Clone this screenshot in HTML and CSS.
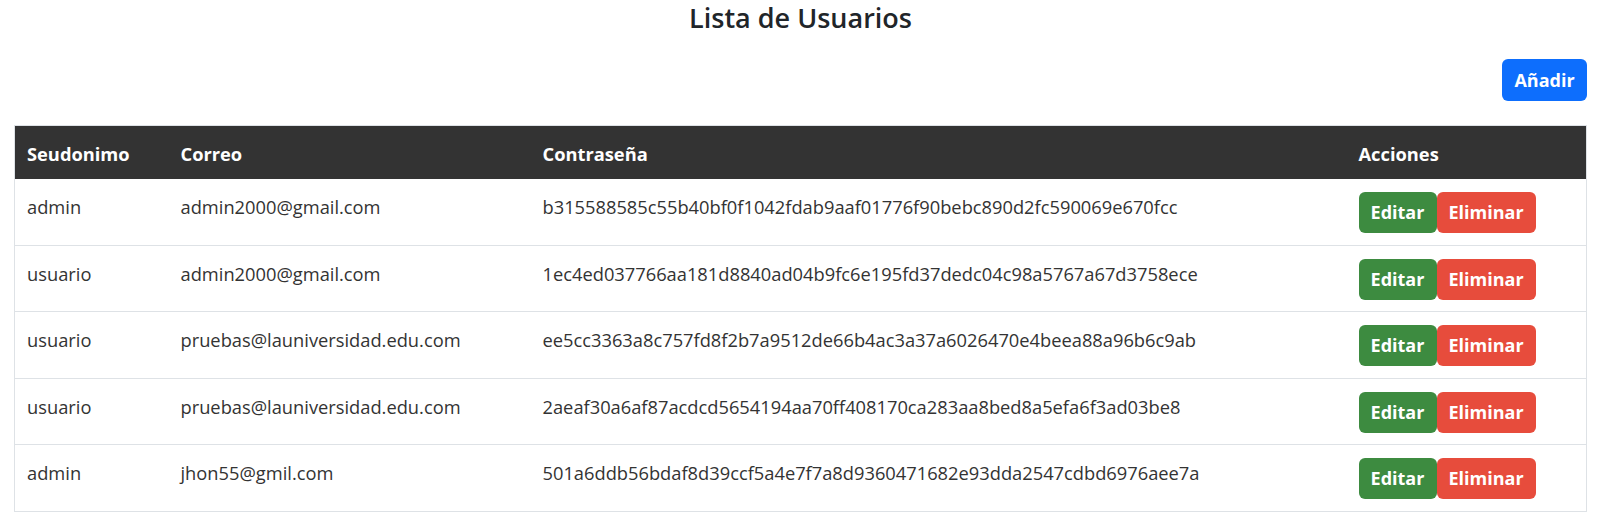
FILE: index.html
```html
<!DOCTYPE html>
<html lang="es">
<head>
<meta charset="utf-8">
<title>Lista de Usuarios</title>
<link rel="stylesheet" href="styles.css">
</head>
<body>
<main class="page">
  <h1 class="title">Lista de Usuarios</h1>
  <div class="toolbar">
    <button class="btn btn-add">Añadir</button>
  </div>
  <table class="users">
    <colgroup>
      <col class="c-alias">
      <col class="c-mail">
      <col class="c-pass">
      <col class="c-actions">
    </colgroup>
    <thead>
      <tr><th>Seudonimo</th><th>Correo</th><th>Contraseña</th><th>Acciones</th></tr>
    </thead>
    <tbody>
      <tr>
        <td>admin</td><td>admin2000@gmail.com</td><td>b315588585c55b40bf0f1042fdab9aaf01776f90bebc890d2fc590069e670fcc</td>
        <td class="actions"><div class="btn-group"><button class="btn btn-edit">Editar</button><button class="btn btn-del">Eliminar</button></div></td>
      </tr>
      <tr>
        <td>usuario</td><td>admin2000@gmail.com</td><td>1ec4ed037766aa181d8840ad04b9fc6e195fd37dedc04c98a5767a67d3758ece</td>
        <td class="actions"><div class="btn-group"><button class="btn btn-edit">Editar</button><button class="btn btn-del">Eliminar</button></div></td>
      </tr>
      <tr>
        <td>usuario</td><td>pruebas@launiversidad.edu.com</td><td>ee5cc3363a8c757fd8f2b7a9512de66b4ac3a37a6026470e4beea88a96b6c9ab</td>
        <td class="actions"><div class="btn-group"><button class="btn btn-edit">Editar</button><button class="btn btn-del">Eliminar</button></div></td>
      </tr>
      <tr>
        <td>usuario</td><td>pruebas@launiversidad.edu.com</td><td>2aeaf30a6af87acdcd5654194aa70ff408170ca283aa8bed8a5efa6f3ad03be8</td>
        <td class="actions"><div class="btn-group"><button class="btn btn-edit">Editar</button><button class="btn btn-del">Eliminar</button></div></td>
      </tr>
      <tr>
        <td>admin</td><td>jhon55@gmil.com</td><td>501a6ddb56bdaf8d39ccf5a4e7f7a8d9360471682e93dda2547cdbd6976aee7a</td>
        <td class="actions"><div class="btn-group"><button class="btn btn-edit">Editar</button><button class="btn btn-del">Eliminar</button></div></td>
      </tr>
    </tbody>
  </table>
</main>
</body>
</html>
```

FILE: styles.css
```css
* { box-sizing: border-box; }
html, body { margin: 0; padding: 0; background: #fff; }
body {
  font-family: "Open Sans", "Noto Sans", sans-serif;
  font-size: 18.3px;
  line-height: 26px;
  color: #333;
}
.page {
  padding: 0 13px 0 14px;
  display: flex;
  flex-direction: column;
}
.title {
  margin: 0;
  text-align: center;
  font-size: 27px;
  line-height: 35px;
  font-weight: 600;
  color: #212529;
}
.toolbar {
  display: flex;
  justify-content: flex-end;
  margin-top: 24px;
  margin-bottom: 24px;
}
.btn {
  font-family: inherit;
  font-size: 18px;
  font-weight: 700;
  color: #fff;
  border: none;
  border-radius: 6px;
  height: 41px;
  line-height: 41px;
  padding: 0;
  cursor: pointer;
}
.btn-add { background: #0d6efd; width: 85px; height: 42px; line-height: 42px; }
.btn-edit { background: #3d8b40; width: 78px; }
.btn-del { background: #e74c3c; width: 99px; }
.users {
  width: 100%;
  table-layout: fixed;
  border-collapse: collapse;
  border: 1px solid #dee2e6;
}
.c-alias { width: 154px; }
.c-mail { width: 362px; }
.c-pass { width: 816px; }
.users th {
  background: #333;
  color: #fff;
  text-align: left;
  font-weight: 700;
  padding: 15px 12px 12px;
}
.users td {
  vertical-align: top;
  padding: 15px 12px 0;
  border-bottom: 1px solid #dee2e6;
  white-space: nowrap;
}
.users td.actions {
  padding: 13px 12px 11.5px;
}
.btn-group {
  display: flex;
}
```
